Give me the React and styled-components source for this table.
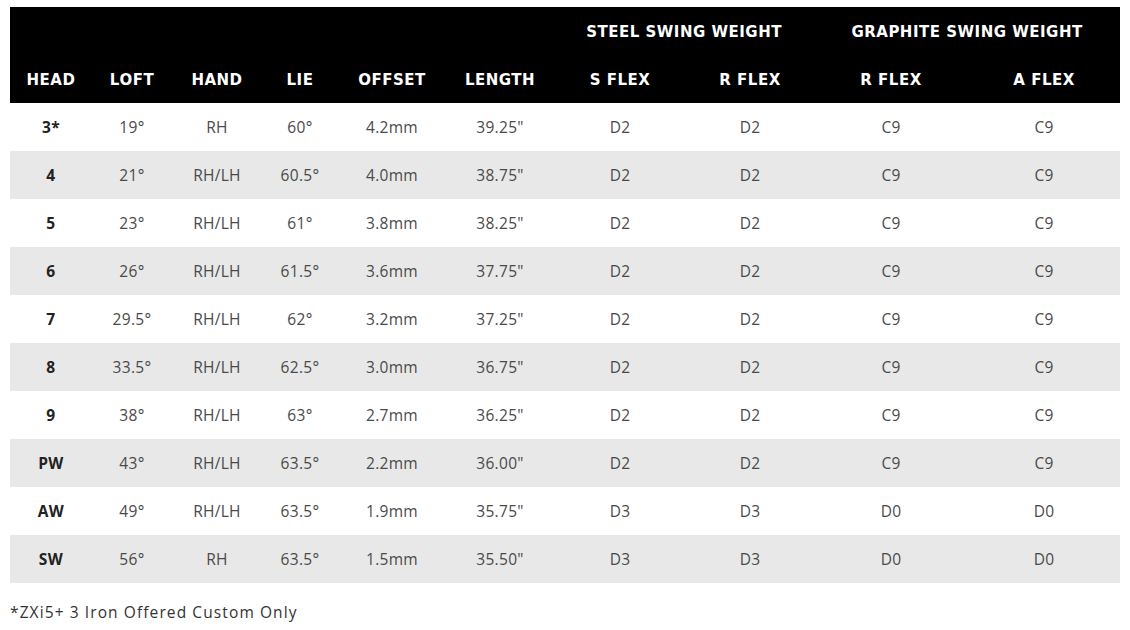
import styled, { createGlobalStyle } from "styled-components";

const GlobalStyle = createGlobalStyle`
    body {
        margin: 0;
        background: #ffffff;
        font-family: "Open Sans", "Liberation Sans", sans-serif;
    }
`

const columns = [82, 80, 90, 76, 108, 108, 132, 128, 154, 152];

const headings = ["HEAD", "LOFT", "HAND", "LIE", "OFFSET", "LENGTH", "S FLEX", "R FLEX", "R FLEX", "A FLEX"];

const rows = [
    ["3*", "19°", "RH", "60°", "4.2mm", "39.25\"", "D2", "D2", "C9", "C9"],
    ["4", "21°", "RH/LH", "60.5°", "4.0mm", "38.75\"", "D2", "D2", "C9", "C9"],
    ["5", "23°", "RH/LH", "61°", "3.8mm", "38.25\"", "D2", "D2", "C9", "C9"],
    ["6", "26°", "RH/LH", "61.5°", "3.6mm", "37.75\"", "D2", "D2", "C9", "C9"],
    ["7", "29.5°", "RH/LH", "62°", "3.2mm", "37.25\"", "D2", "D2", "C9", "C9"],
    ["8", "33.5°", "RH/LH", "62.5°", "3.0mm", "36.75\"", "D2", "D2", "C9", "C9"],
    ["9", "38°", "RH/LH", "63°", "2.7mm", "36.25\"", "D2", "D2", "C9", "C9"],
    ["PW", "43°", "RH/LH", "63.5°", "2.2mm", "36.00\"", "D2", "D2", "C9", "C9"],
    ["AW", "49°", "RH/LH", "63.5°", "1.9mm", "35.75\"", "D3", "D3", "D0", "D0"],
    ["SW", "56°", "RH", "63.5°", "1.5mm", "35.50\"", "D3", "D3", "D0", "D0"],
];

export default function App () {
    return (
        <>
            <GlobalStyle />
            <Page>
                <SpecTable>
                    <colgroup>
                        {columns.map((w, i) => <col key={i} style={{ width: w }} />)}
                    </colgroup>
                    <thead>
                        <GroupRow>
                            <th colSpan={6}></th>
                            <GroupCell colSpan={2}>STEEL SWING WEIGHT</GroupCell>
                            <GroupCell colSpan={2}>GRAPHITE SWING WEIGHT</GroupCell>
                        </GroupRow>
                        <HeadRow>
                            {headings.map((h, i) => <HeadCell key={i}>{h}</HeadCell>)}
                        </HeadRow>
                    </thead>
                    <tbody>
                        {rows.map((row, i) =>
                            <BodyRow key={i} $shaded={i % 2 === 1}>
                                {row.map((cell, j) => <Cell key={j} $bold={j === 0}>{cell}</Cell>)}
                            </BodyRow>
                        )}
                    </tbody>
                </SpecTable>
                <Footnote>*ZXi5+ 3 Iron Offered Custom Only</Footnote>
            </Page>
        </>
    )
}

const Page = styled.div`
    padding: 7px 10px 0 10px;
`
const SpecTable = styled.table`
    width: 1110px;
    table-layout: fixed;
    border-collapse: collapse;
    border-spacing: 0;
`
const GroupRow = styled.tr`
    height: 49px;
    background-color: #000000;
`
const GroupCell = styled.th`
    color: #ffffff;
    font-family: "DejaVu Sans", "Open Sans", sans-serif;
    font-size: 15px;
    font-weight: 700;
    letter-spacing: 0.5px;
    text-align: center;
    vertical-align: middle;
    padding: 0;
`
const HeadRow = styled.tr`
    height: 47px;
    background-color: #000000;
`
const HeadCell = styled.th`
    color: #ffffff;
    font-family: "DejaVu Sans", "Open Sans", sans-serif;
    font-size: 15px;
    font-weight: 700;
    letter-spacing: 0.5px;
    text-align: center;
    vertical-align: middle;
    padding: 0;
`
const BodyRow = styled.tr`
    height: 48px;
    background-color: ${props => props.$shaded ? "#e8e8e8" : "#ffffff"};
`
const Cell = styled.td`
    color: ${props => props.$bold ? "#222222" : "#4a4a4a"};
    font-size: 15.5px;
    font-weight: ${props => props.$bold ? 700 : 400};
    letter-spacing: ${props => props.$bold ? "0.4px" : "0.3px"};
    text-align: center;
    vertical-align: middle;
    padding: 0;
`
const Footnote = styled.p`
    margin: 18px 0 0 0;
    font-size: 15.5px;
    color: #333333;
    letter-spacing: 1.1px;
`
